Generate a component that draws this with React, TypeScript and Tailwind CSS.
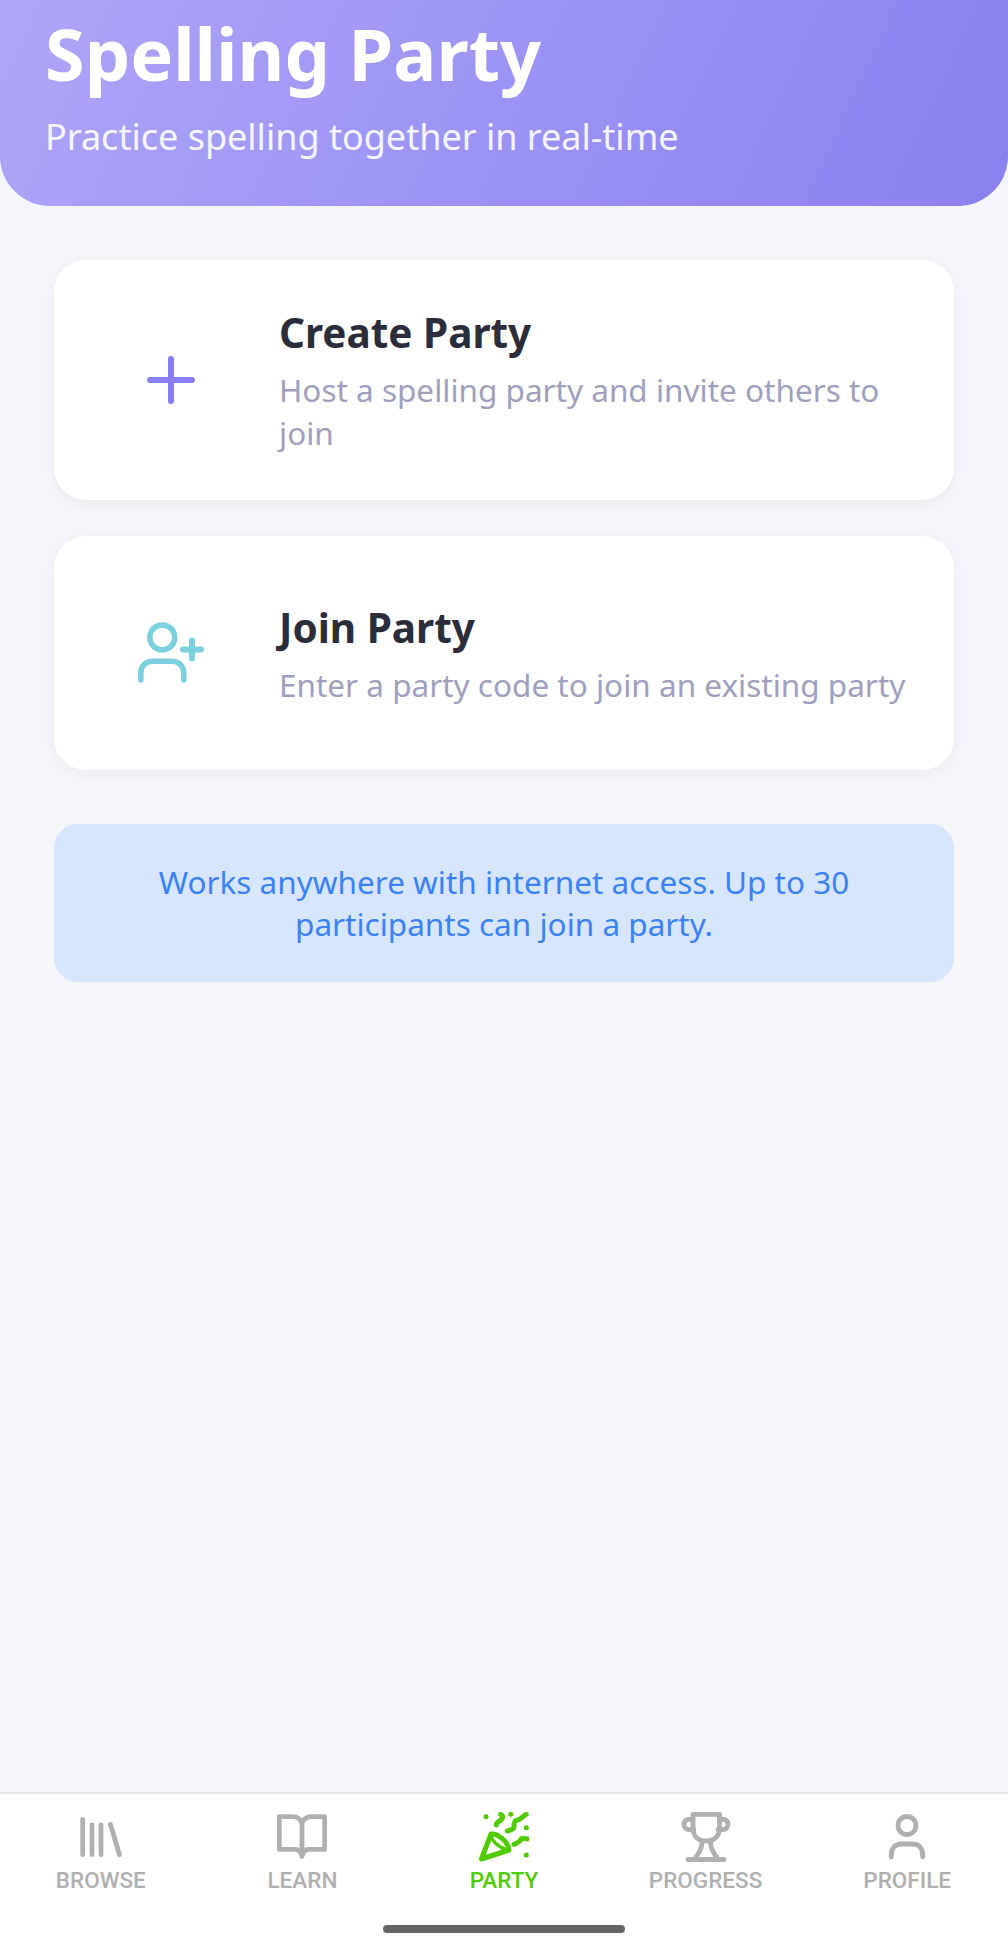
import { Plus } from "lucide-react";

function BrowseIcon() {
  return (
    <svg width="50" height="50" viewBox="0 0 50 50" fill="none" stroke="currentColor" strokeWidth="4.8" strokeLinecap="round">
      <path d="M6.700 7.300v35.400M16 13v29.700M25 13v29.700M34.500 12.500l9 30.200" />
    </svg>
  );
}

function LearnIcon() {
  return (
    <svg width="50" height="50" viewBox="0 0 50 50" fill="none" stroke="currentColor" strokeWidth="4.8" strokeLinejoin="round" strokeLinecap="round">
      <path d="M25 11C23 7 20 4.600 16 4.600H2.300V37.400H18c3 0 6 2 7 7 1-5 4-7 7-7h15.700V4.600H34C30 4.600 27 7 25 11zM25 11v33" />
    </svg>
  );
}

function PartyIcon() {
  return (
    <svg width="50" height="50" viewBox="0 0 50 50" fill="none" stroke="currentColor" strokeWidth="5" strokeLinecap="round" strokeLinejoin="round">
      <path d="M2.500 47L12 22c6-1 18 8 18 16z" />
      <path strokeWidth="3.500" d="M12 22c-1 4 6 14 18 16" />
      <path d="M17.300 13c0-3 3.400-3 6-6.700 1-2-1.600-4-1.600-4M28.300 19c3-1 6.700-1.300 6.700-4.300 0-4 .3-6.700 3.300-6.700 4 0 5-4 9-5.700M35 32.300c3 0 3.500-2.600 5-2.600 1.500 0 1.500-3.400 3.300-3.400 1.700 0 3.500.7 5 .7" />
      <path d="M7 4.700h.1M31.700 2.300h.1M47.300 15.700h.1M47.300 43h.1" />
    </svg>
  );
}

function TrophyIcon() {
  return (
    <svg width="50" height="50" viewBox="0 0 50 50" fill="none" stroke="currentColor" strokeWidth="4.8" strokeLinecap="round" strokeLinejoin="round">
      <path d="M12 2.300h26.500V16c0 8-5 13-13.250 13S12 24 12 16z" />
      <path d="M12 7.300H8c-3.500 0-5 2.500-5 5.200s2 5.200 5.500 5.200H13M38.500 7.300H42c3.500 0 5 2.500 5 5.200s-2 5.200-5.500 5.200H37" />
      <path d="M21 29c0 6-1 9-6 16M29.500 29c0 6 1 9 6 16M7 47.500h36" />
    </svg>
  );
}

function ProfileIcon() {
  return (
    <svg width="50" height="50" viewBox="0 0 50 50" fill="none" stroke="currentColor" strokeWidth="4.8" strokeLinecap="round">
      <circle cx="25" cy="13.500" r="9" />
      <path d="M9.300 45v-2c0-7 4-11 10-11h11.400c6 0 10 4 10 11v2" />
    </svg>
  );
}

function JoinIcon() {
  return (
    <svg width="68" height="64" viewBox="0 0 68 64" fill="none" stroke="#7dd1df" strokeWidth="5.500" strokeLinecap="round">
      <circle cx="25.300" cy="16.400" r="12.500" />
      <path d="M3.800 59v-7c0-7 5-11.800 12-11.800h19c7 0 12 4.800 12 11.800v7" />
      <path strokeWidth="6" d="M46 28.500h18M55 19.500v18" />
    </svg>
  );
}

const navItems = [
  { label: "BROWSE", icon: <BrowseIcon /> },
  { label: "LEARN", icon: <LearnIcon /> },
  { label: "PARTY", icon: <PartyIcon />, active: true },
  { label: "PROGRESS", icon: <TrophyIcon /> },
  { label: "PROFILE", icon: <ProfileIcon /> },
];

export default function App() {
  return (
    <div className="flex h-[1956px] w-[1008px] flex-col overflow-hidden bg-[#f5f6fa] font-['Noto_Sans',sans-serif]">
      <header className="h-[206px] shrink-0 rounded-b-[50px] bg-[linear-gradient(115deg,#ada6f8,#8a81f0)] px-[45px]">
        <h1 className="mt-[-1px] text-[72px] leading-[108px] font-bold text-white">Spelling Party</h1>
        <p className="mt-[5px] text-[36px] leading-[50px] text-white/90">Practice spelling together in real-time</p>
      </header>

      <main className="flex flex-1 flex-col px-[54px] pt-[54px]">
        <div className="flex h-[240px] items-center rounded-[32px] bg-white pr-[40px] pl-[54px] shadow-[0_4px_16px_rgba(0,0,0,0.05)]">
          <div className="flex w-[171px] shrink-0 pl-[27px]">
            <Plus size={72} strokeWidth={2} color="#877ef0" />
          </div>
          <div className="pb-[1px]">
            <h2 className="text-[40.5px] leading-[56px] font-bold text-[#2b2d3a]">Create Party</h2>
            <p className="mt-[7px] text-[31.5px] leading-[43px] text-[#a09fbd]">Host a spelling party and invite others to join</p>
          </div>
        </div>

        <div className="mt-[36px] flex h-[234px] items-center rounded-[32px] bg-white pr-[40px] pl-[54px] shadow-[0_4px_16px_rgba(0,0,0,0.05)]">
          <div className="flex w-[171px] shrink-0 pl-[29px]">
            <JoinIcon />
          </div>
          <div className="pb-[1px]">
            <h2 className="text-[40.5px] leading-[56px] font-bold text-[#2b2d3a]">Join Party</h2>
            <p className="mt-[7px] text-[31.5px] leading-[43px] text-[#a09fbd]">Enter a party code to join an existing party</p>
          </div>
        </div>

        <div className="mt-[54px] flex h-[158px] items-center justify-center rounded-[24px] bg-[#d7e5fd] px-[54px] text-center text-[31.5px] leading-[42px] text-[#3b82f6]">
          Works anywhere with internet access. Up to 30 participants can join a party.
        </div>
      </main>

      <nav className="h-[164px] shrink-0 border-t-2 border-[#e5e6ea] bg-white font-['Roboto',sans-serif]">
        <div className="flex pt-[18px]">
          {navItems.map((item) => (
            <div key={item.label} className={`flex flex-1 flex-col items-center ${item.active ? "text-[#4fcb00]" : "text-[#b0b0b0]"}`}>
              {item.icon}
              <span className="mt-[5px] text-[22.5px] leading-[26px] font-medium">{item.label}</span>
            </div>
          ))}
        </div>
        <div className="mx-auto mt-[32px] h-[8px] w-[242px] rounded-full bg-[#666666]" />
      </nav>
    </div>
  );
}
